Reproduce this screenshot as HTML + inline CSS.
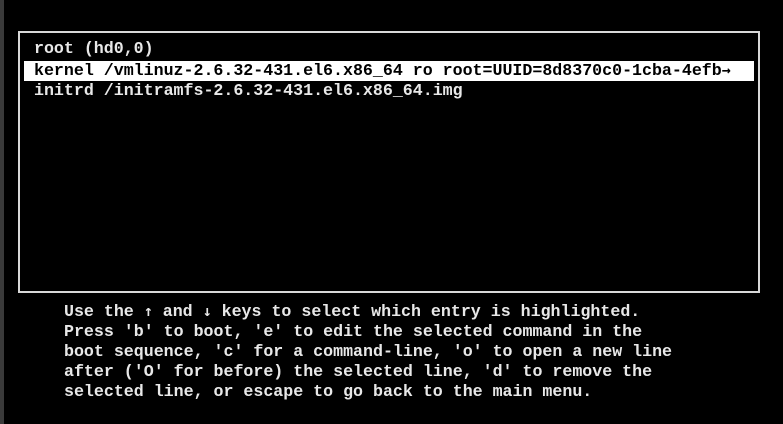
<!DOCTYPE html>
<html><head><style>
html,body{margin:0;padding:0;background:#000;width:783px;height:424px;overflow:hidden;position:relative}
.strip{position:absolute;left:0;top:0;width:4px;height:424px;background:#3a3a3a}
.box{position:absolute;left:18px;top:31px;width:738px;height:258px;border:2px solid #d8d8d8}
.t{position:absolute;font-family:"Liberation Mono",monospace;font-size:16.62px;font-weight:bold;color:#e8e8e8;white-space:pre;line-height:20.5px;letter-spacing:0}
.hl{position:absolute;left:24px;top:61px;width:730px;height:20px;background:#fff}
</style></head><body>
<div class="strip"></div>
<div class="box"></div>
<div class="hl"></div>
<div class="t" style="left:34px;top:39px">root (hd0,0)</div>
<div class="t" style="left:34px;top:60px;color:#000">kernel /vmlinuz-2.6.32-431.el6.x86_64 ro root=UUID=8d8370c0-1cba-4efb<span style="font-family:'DejaVu Sans Mono',monospace;font-size:15px">→</span></div>
<div class="t" style="left:34px;top:81px">initrd /initramfs-2.6.32-431.el6.x86_64.img</div>
<div class="t" style="left:64px;top:301px;line-height:20px">Use the <span style="font-family:'DejaVu Sans Mono',monospace;font-size:15px">↑</span> and <span style="font-family:'DejaVu Sans Mono',monospace;font-size:15px">↓</span> keys to select which entry is highlighted.
Press 'b' to boot, 'e' to edit the selected command in the
boot sequence, 'c' for a command-line, 'o' to open a new line
after ('O' for before) the selected line, 'd' to remove the
selected line, or escape to go back to the main menu.</div>
</body></html>
